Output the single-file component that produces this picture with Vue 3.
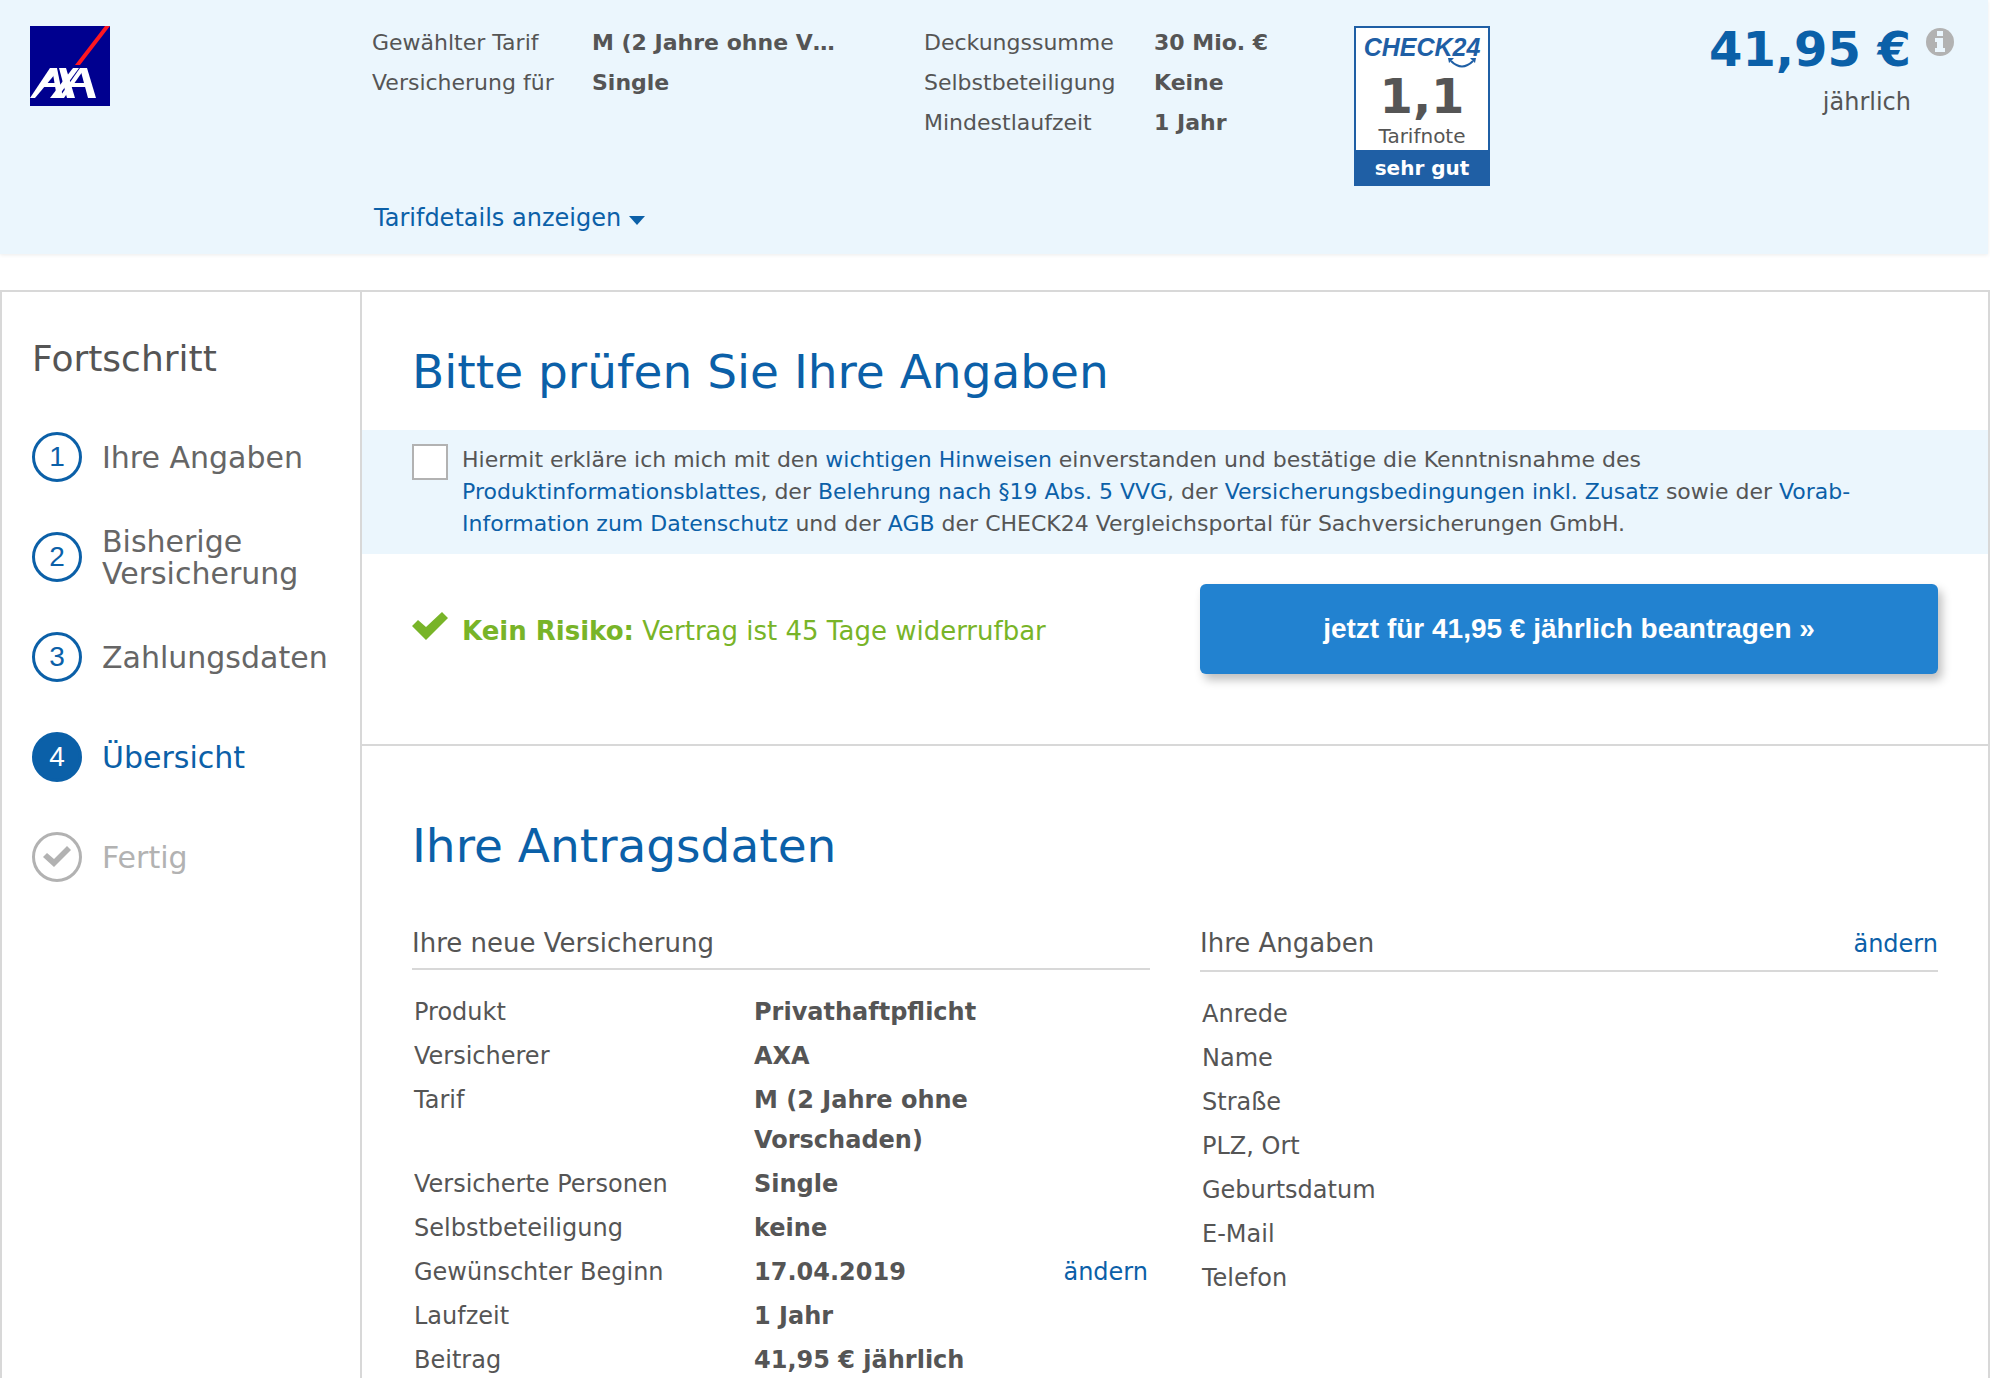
<script setup>
const tariff = [
  ['Gewählter Tarif', 'M (2 Jahre ohne V…'],
  ['Versicherung für', 'Single'],
]
const terms = [
  ['Deckungssumme', '30 Mio. €'],
  ['Selbstbeteiligung', 'Keine'],
  ['Mindestlaufzeit', '1 Jahr'],
]
const steps = [
  { mark: '1', label: 'Ihre Angaben', state: 'done' },
  { mark: '2', label: 'Bisherige Versicherung', state: 'done' },
  { mark: '3', label: 'Zahlungsdaten', state: 'done' },
  { mark: '4', label: 'Übersicht', state: 'active' },
  { mark: '', label: 'Fertig', state: 'open' },
]
const insurance = [
  { name: 'Produkt', value: 'Privathaftpflicht' },
  { name: 'Versicherer', value: 'AXA' },
  { name: 'Tarif', value: 'M (2 Jahre ohne Vorschaden)' },
  { name: 'Versicherte Personen', value: 'Single' },
  { name: 'Selbstbeteiligung', value: 'keine' },
  { name: 'Gewünschter Beginn', value: '17.04.2019', editable: true },
  { name: 'Laufzeit', value: '1 Jahr' },
  { name: 'Beitrag', value: '41,95 € jährlich' },
]
const person = ['Anrede', 'Name', 'Straße', 'PLZ, Ort', 'Geburtsdatum', 'E-Mail', 'Telefon']
</script>

<template>
  <div class="page">
    <header class="summary">
      <svg class="axa" viewBox="0 0 80 80" role="img" aria-label="AXA">
        <rect width="80" height="80" fill="#00008f" />
        <path d="M75 0h5L50 39h-5z" fill="#ff1721" />
        <g fill="#fff">
          <path d="M0 72h5L26 47l1-5h-7z" />
          <path d="M22 42h5l6 30h-6z" />
          <path d="M29 42h7l9 30h-8z" />
          <path d="M43 42h6L27 72h-7z" />
          <path d="M50 42h5L34 72h-5z" />
          <path d="M50 42h7l9 30h-8z" />
          <path d="M14 57h14v4H11zM42 57h16v4H40z" />
        </g>
      </svg>
      <div class="tariff">
        <dl class="facts facts-tariff">
          <template v-for="[name, value] in tariff" :key="name">
            <dt>{{ name }}</dt>
            <dd>{{ value }}</dd>
          </template>
        </dl>
        <a class="details" href="#details">Tarifdetails anzeigen
          <svg viewBox="0 0 16 10" width="16" height="10" aria-hidden="true"><path d="M0 0h16L8 9z" fill="currentColor" /></svg>
        </a>
      </div>
      <dl class="facts facts-terms">
        <template v-for="[name, value] in terms" :key="name">
          <dt>{{ name }}</dt>
          <dd>{{ value }}</dd>
        </template>
      </dl>
      <div class="grade">
        <div class="brand">CHECK24
          <svg class="smile" viewBox="0 0 30 10" aria-hidden="true">
            <path d="M4 3q11 11 22 0" fill="none" stroke="#1f5fa5" stroke-width="2" />
            <path d="M1 0h6l-5 5zM29 0h-6l5 5z" fill="#1f5fa5" />
          </svg>
        </div>
        <strong class="mark">1,1</strong>
        <span class="note">Tarifnote</span>
        <strong class="verdict">sehr gut</strong>
      </div>
      <div class="price">
        <div class="amount">
          <strong>41,95 €</strong>
          <span>jährlich</span>
        </div>
        <button class="info" type="button" aria-label="Information">
          <svg viewBox="0 0 28 28" aria-hidden="true">
            <circle cx="14" cy="14" r="14" fill="#b2b2b2" />
            <path d="M11 3h6v5h-6zM9 10h8v10h2v4H9v-4h2v-6H9z" fill="#ebf6fd" />
          </svg>
        </button>
      </div>
    </header>

    <div class="frame">
      <nav class="progress">
        <h2>Fortschritt</h2>
        <ol>
          <li v-for="step in steps" :key="step.label" :class="step.state">
            <span class="bubble">
              {{ step.mark }}
              <svg v-if="!step.mark" viewBox="0 0 30 22" width="30" height="22" aria-hidden="true">
                <path d="M1 11 5 7l7 6L25 0l4 4-17 17z" fill="#b2b2b2" />
              </svg>
            </span>
            <span class="label">{{ step.label }}</span>
          </li>
        </ol>
      </nav>

      <main>
        <section class="check">
          <h1>Bitte prüfen Sie Ihre Angaben</h1>
          <div class="consent">
            <input id="consent" type="checkbox" />
            <label for="consent">
              Hiermit erkläre ich mich mit den <a href="#hinweise">wichtigen Hinweisen</a> einverstanden und bestätige die Kenntnisnahme des
              <a href="#produkt">Produktinformationsblattes</a>, der <a href="#belehrung">Belehrung nach §19 Abs. 5 VVG</a>, der
              <a href="#bedingungen">Versicherungsbedingungen inkl. Zusatz</a> sowie der <a href="#datenschutz">Vorab-Information zum Datenschutz</a>
              und der <a href="#agb">AGB</a> der CHECK24 Vergleichsportal für Sachversicherungen GmbH.
            </label>
          </div>
          <div class="submit">
            <p>
              <svg viewBox="0 0 36 28" width="36" height="28" aria-hidden="true">
                <path d="M0 14 6 8l8 7L30 0l6 6-22 22z" fill="#78b428" />
              </svg>
              <span><strong>Kein Risiko:</strong> Vertrag ist 45 Tage widerrufbar</span>
            </p>
            <button type="button">jetzt für 41,95 € jährlich beantragen »</button>
          </div>
        </section>

        <section class="data">
          <h1>Ihre Antragsdaten</h1>
          <div class="columns">
            <div class="column">
              <h3>Ihre neue Versicherung</h3>
              <table>
                <tbody>
                  <tr v-for="row in insurance" :key="row.name">
                    <th scope="row">{{ row.name }}</th>
                    <td class="value">{{ row.value }}</td>
                    <td class="edit"><a v-if="row.editable" href="#beginn">ändern</a></td>
                  </tr>
                </tbody>
              </table>
            </div>
            <div class="column">
              <div class="head">
                <h3>Ihre Angaben</h3>
                <a href="#angaben">ändern</a>
              </div>
              <table>
                <tbody>
                  <tr v-for="name in person" :key="name">
                    <th scope="row">{{ name }}</th>
                    <td></td>
                  </tr>
                </tbody>
              </table>
            </div>
          </div>
        </section>
      </main>
    </div>
  </div>
</template>

<style>
body {
  margin: 0;
  background: #fff;
}
</style>

<style scoped>
.page {
  display: flex;
  flex-direction: column;
  gap: 36px;
  min-height: 100vh;
  color: #555;
  font: 24px/40px Verdana, "DejaVu Sans", sans-serif;
}
* {
  box-sizing: border-box;
}
a {
  color: #0b60a8;
  text-decoration: none;
}
h1, h2, h3, p, dl, dd, ol {
  margin: 0;
  padding: 0;
  font-weight: 400;
}
button {
  border: 0;
  padding: 0;
  cursor: pointer;
}

.summary {
  display: flex;
  flex: none;
  height: 254px;
  margin-right: 2px;
  padding: 22px 34px 0 30px;
  background: #ebf6fd;
  box-shadow: 0 1px 4px rgba(0, 0, 0, 0.08);
}
.axa {
  flex: none;
  width: 80px;
  height: 80px;
  margin: 4px 262px 0 0;
}
.tariff {
  display: flex;
  flex-direction: column;
  width: 552px;
}
.facts {
  display: grid;
  align-content: start;
  padding-top: 1px;
  font-size: 22px;
  white-space: nowrap;
}
.facts-tariff {
  grid-template-columns: 220px 1fr;
  height: 176px;
}
.facts-terms {
  grid-template-columns: 230px 1fr;
  width: 430px;
}
.facts dd {
  font-weight: 700;
}
.details {
  padding-left: 2px;
}

.grade {
  display: flex;
  flex-direction: column;
  align-items: center;
  width: 136px;
  height: 160px;
  margin-top: 4px;
  border: 2px solid #1f5fa5;
  background: #fff;
}
.brand {
  position: relative;
  flex: none;
  height: 42px;
  color: #1f5fa5;
  font: italic 700 25px/38px "Liberation Sans", Arial, sans-serif;
}
.smile {
  position: absolute;
  right: 3px;
  bottom: 2px;
  width: 30px;
  height: 10px;
}
.mark {
  font-size: 48px;
  line-height: 52px;
}
.note {
  font-size: 20px;
  line-height: 28px;
}
.verdict {
  align-self: stretch;
  flex: none;
  height: 34px;
  background: #1f5fa5;
  color: #fff;
  font-size: 20px;
  line-height: 36px;
  text-align: center;
}
.price {
  display: flex;
  gap: 15px;
  margin-left: auto;
}
.amount {
  display: flex;
  flex-direction: column;
  align-items: flex-end;
}
.amount strong {
  color: #0b60a8;
  font-size: 48px;
  line-height: 54px;
}
.amount span {
  line-height: 52px;
}
.info {
  width: 28px;
  height: 28px;
  margin-top: 6px;
  background: none;
}
.info svg {
  display: block;
}

.frame {
  display: flex;
  flex: 1 0 auto;
  border: 2px solid #d8d8d8;
  border-bottom: 0;
}
.progress {
  width: 360px;
  flex: none;
  padding: 40px 0 0 30px;
  border-right: 2px solid #d8d8d8;
}
.progress h2 {
  font-size: 36px;
  line-height: 54px;
}
.progress ol {
  margin-top: 46px;
  list-style: none;
}
.progress li {
  display: flex;
  align-items: center;
  gap: 20px;
  height: 50px;
  margin-bottom: 50px;
  color: #666;
  font-size: 30px;
  line-height: 32px;
}
.label {
  padding-top: 2px;
}
.bubble {
  display: flex;
  flex: none;
  align-items: center;
  justify-content: center;
  width: 50px;
  height: 50px;
  border: 3px solid #0b60a8;
  border-radius: 50%;
  color: #0b60a8;
  font: 28px/32px "Liberation Sans", Arial, sans-serif;
}
.progress .active {
  color: #0b60a8;
}
.active .bubble {
  background: #0b60a8;
  color: #fff;
}
.progress .open {
  color: #b2b2b2;
}
.open .bubble {
  border-color: #b2b2b2;
}

main {
  flex: 1;
  min-width: 0;
}
main h1 {
  padding-left: 50px;
  color: #0b60a8;
  font-size: 47px;
  line-height: 60px;
}
.check {
  height: 454px;
  padding-top: 50px;
  border-bottom: 2px solid #d8d8d8;
}
.consent {
  display: flex;
  align-items: flex-start;
  gap: 14px;
  height: 124px;
  margin-top: 28px;
  padding: 14px 100px 0 50px;
  background: #ebf6fd;
  font-size: 22px;
  line-height: 32px;
}
.consent input {
  flex: none;
  width: 36px;
  height: 36px;
  margin: 0;
  border: 2px solid #b2b2b2;
  background: #fff;
  appearance: none;
}
.submit {
  display: flex;
  align-items: flex-start;
  justify-content: space-between;
  padding: 30px 50px 0;
}
.submit p {
  display: flex;
  gap: 14px;
  color: #78b428;
  font-size: 26px;
  line-height: 94px;
}
.submit svg {
  margin-top: 28px;
}
.submit button {
  width: calc(50% - 25px);
  height: 90px;
  border-radius: 6px;
  background: #2282d0;
  box-shadow: 4px 6px 10px rgba(0, 0, 0, 0.25);
  color: #fff;
  font: 700 28px/90px "Liberation Sans", Arial, sans-serif;
}

.data {
  padding-top: 70px;
}
.columns {
  display: flex;
  gap: 50px;
  padding: 44px 50px 0;
}
.column {
  flex: 1;
}
.column h3 {
  padding-bottom: 2px;
  font-size: 26px;
  line-height: 46px;
}
.column > h3,
.head {
  border-bottom: 2px solid #d8d8d8;
}
.head {
  display: flex;
  justify-content: space-between;
  align-items: center;
  height: 52px;
  padding-bottom: 2px;
}
.column table {
  width: 100%;
  margin-top: 20px;
  border-collapse: collapse;
}
th, td {
  padding: 2px;
  font-weight: 400;
  text-align: left;
  vertical-align: top;
}
th {
  width: 340px;
}
.value {
  width: 250px;
  font-weight: 700;
}
.edit {
  text-align: right;
}
</style>
